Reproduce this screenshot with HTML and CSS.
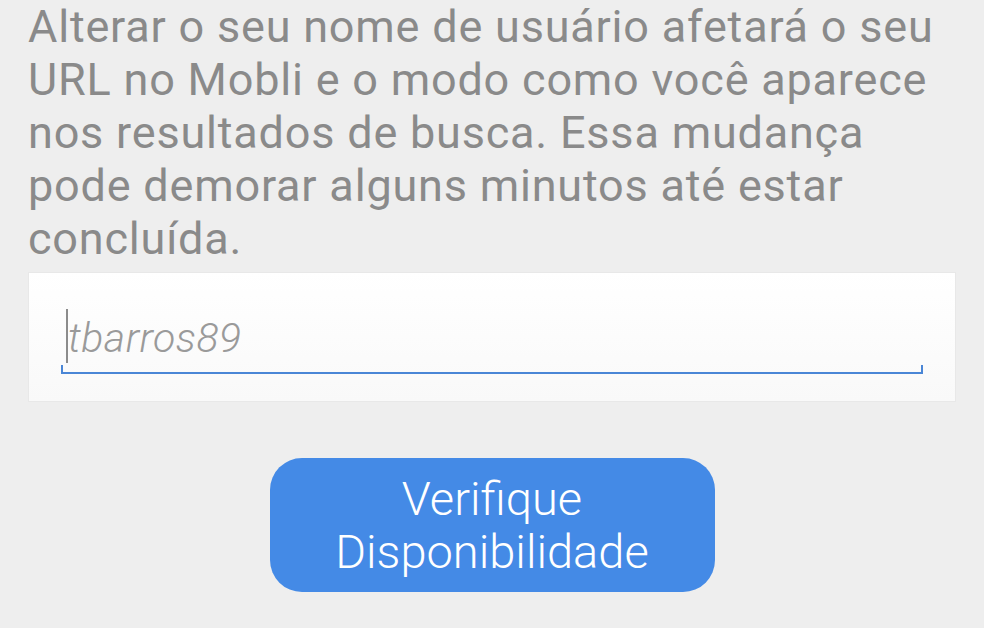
FILE: index.html
```html
<!DOCTYPE html>
<html lang="pt-BR">
<head>
<meta charset="utf-8">
<link rel="stylesheet" href="styles.css">
</head>
<body>
<main class="screen">
  <p class="info">Alterar o seu nome de usuário afetará o seu<br>URL no Mobli e o modo como você aparece<br>nos resultados de busca. Essa mudança<br>pode demorar alguns minutos até estar<br>concluída.</p>
  <div class="field-card">
    <div class="field">
      <span class="caret"></span>
      <span class="placeholder">tbarros89</span>
    </div>
  </div>
  <div class="actions">
    <button class="check-btn">Verifique<br>Disponibilidade</button>
  </div>
</main>
</body>
</html>
```

FILE: styles.css
```css
html, body {
  margin: 0;
  padding: 0;
  background: #eeeeee;
}
body {
  width: 984px;
  height: 628px;
  overflow: hidden;
  font-family: Roboto, "Noto Sans", sans-serif;
}
.screen {
  padding: 0 28px;
}
.info {
  margin: 0;
  font-size: 45px;
  letter-spacing: 0.8px;
  line-height: 53px;
  color: #8a8a8a;
}
.field-card {
  margin-top: 7px;
  height: 130px;
  box-sizing: border-box;
  background: linear-gradient(#ffffff, #f9f9f9);
  border: 1px solid #e8e8e8;
  padding: 35px 32px 0 32px;
}
.field {
  position: relative;
  height: 64px;
  display: flex;
  align-items: flex-start;
  border-bottom: 2px solid #4a86d6;
  padding-left: 5px;
}
.field::before,
.field::after {
  content: "";
  position: absolute;
  bottom: 0;
  width: 2px;
  height: 7px;
  background: #4a86d6;
}
.field::before { left: 0; }
.field::after { right: 0; }
.caret {
  width: 2px;
  height: 54px;
  margin-top: 1px;
  background: #8c8c8c;
}
.placeholder {
  font-size: 41px;
  letter-spacing: 0.5px;
  line-height: 48px;
  margin-top: 6px;
  font-style: italic;
  font-weight: 300;
  color: #9a9a9a;
}
.actions {
  display: flex;
  justify-content: center;
  margin-top: 56px;
}
.check-btn {
  width: 445px;
  height: 134px;
  border: none;
  border-radius: 32px;
  background: #448ae6;
  color: #ffffff;
  font-family: Roboto, "Noto Sans", sans-serif;
  font-size: 47px;
  font-weight: 300;
  line-height: 53px;
  padding: 0;
}
```
